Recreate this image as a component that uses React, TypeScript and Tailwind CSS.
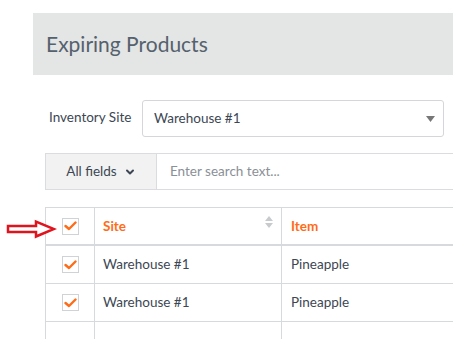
import { ChevronDown } from "lucide-react"

const rows = [
  { site: "Warehouse #1", item: "Pineapple" },
  { site: "Warehouse #1", item: "Pineapple" },
  { site: "", item: "" },
]

function Check() {
  return (
    <span className="flex h-[17px] w-[17px] items-center justify-center border border-[#cfd3d6] bg-white">
      <svg width="13" height="10" viewBox="0 0 13 10">
        <path d="M1.5 5 L5 8 L11.5 1.5" fill="none" stroke="#ff6c18" strokeWidth="2.4" strokeLinecap="round" strokeLinejoin="round" />
      </svg>
    </span>
  )
}

function RedArrow() {
  return (
    <svg width="52" height="20" viewBox="0 0 52 20" className="absolute left-[5px] top-[12px]">
      <path
        d="M3 7 L31 7 L31 2.5 L49 10 L31 17.5 L31 13 L3 13 Z"
        fill="white"
        stroke="#e0141e"
        strokeWidth="2.5"
        strokeLinejoin="miter"
      />
    </svg>
  )
}

export default function App() {
  return (
    <div className="relative h-[339px] w-[467px] overflow-hidden bg-white font-['Lato','Open_Sans',sans-serif] text-[#3c4753]">
      <div className="pl-[33px] pt-[13px]">
        <div className="w-[420px] overflow-hidden">
          <div className="flex h-[62px] items-center bg-[#e4e5e5] pl-[13px] text-[21px] text-[#55616d]">
            Expiring Products
          </div>

          <div className="pl-[12px]">
            <div className="mt-[25px] flex items-start">
              <div className="w-[97px] pl-[4px] pt-[7px] text-[13.5px] text-[#3c4753]">Inventory Site</div>
              <div className="flex h-[37px] w-[302px] items-center justify-between rounded-[3px] border border-[#d4d6da] pl-[11px] pr-[8px] text-[13.5px]">
                <span>Warehouse #1</span>
                <svg width="9" height="6" viewBox="0 0 9 6">
                  <path d="M0 0 H9 L4.5 6 Z" fill="#777" />
                </svg>
              </div>
            </div>

            <div className="mt-[16px] flex h-[37px] w-[420px] border-y border-[#dadcdf]">
              <div className="flex w-[112px] items-center justify-center gap-[7px] border-x border-[#dadcdf] bg-[#f2f2f2] text-[13.5px]">
                All fields
                <ChevronDown size={12} strokeWidth={4} />
              </div>
              <div className="flex items-center pl-[13px] text-[13.5px] text-[#8a9097]">Enter search text...</div>
            </div>

            <div className="relative mt-[17px] w-[420px] border-l border-t border-[#d6dadd]">
              <div className="flex h-[38px] border-b-[2px] border-[#d6dadd]">
                <div className="flex w-[49px] items-center justify-center border-r border-[#d6dadd]">
                  <Check />
                </div>
                <div className="flex w-[187px] items-center justify-between border-r border-[#d6dadd] pl-[8px] pr-[8px]">
                  <span className="text-[13.5px] font-bold text-[#ff6c18]">Site</span>
                  <svg width="8" height="12" viewBox="0 0 8 12" className="-mt-[8px]">
                    <path d="M0 5 L4 0 L8 5 Z M0 7 L4 12 L8 7 Z" fill="#c8cbce" />
                  </svg>
                </div>
                <div className="flex flex-1 items-center pl-[9px]">
                  <span className="text-[13.5px] font-bold text-[#ff6c18]">Item</span>
                </div>
              </div>
              {rows.map((r, i) => (
                <div key={i} className="flex h-[38px] border-b border-[#d6dadd]">
                  <div className="flex w-[49px] items-center justify-center border-r border-[#d6dadd]">
                    {r.site && <Check />}
                  </div>
                  <div className="flex w-[187px] items-center border-r border-[#d6dadd] pl-[8px] text-[13.5px]">
                    {r.site}
                  </div>
                  <div className="flex flex-1 items-center pl-[9px] text-[13.5px]">{r.item}</div>
                </div>
              ))}
            </div>
          </div>
        </div>
      </div>
      <div className="absolute left-0 top-[207px]">
        <RedArrow />
      </div>
    </div>
  )
}
